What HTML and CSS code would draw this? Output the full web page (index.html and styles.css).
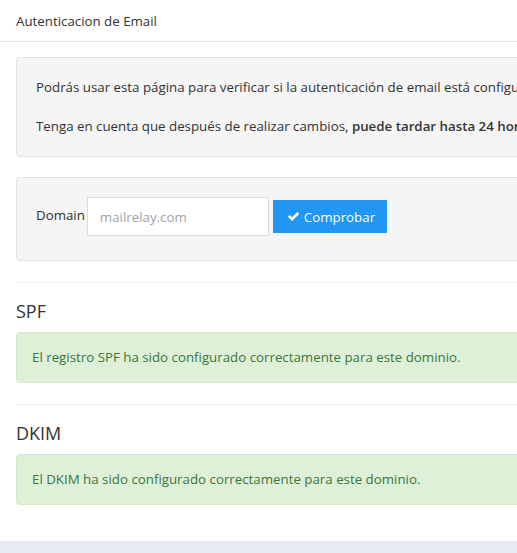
FILE: index.html
```html
<!DOCTYPE html>
<html lang="es">
<head>
    <meta charset="UTF-8">
    <meta name="viewport" content="width=device-width, initial-scale=1.0">
    <title>Autenticacion de Email</title>
    <link rel="stylesheet" href="styles.css">
</head>
<body>

    <div class="card">
        <div class="card-header">Autenticacion de Email</div>

        <div class="card-body">
            <div class="well">
                <p>Podrás usar esta página para verificar si la autenticación de email está configurada correctamente.</p>
                <p>Tenga en cuenta que después de realizar cambios, <strong>puede tardar hasta 24 horas</strong> en propagarse.</p>
            </div>

            <form class="well check-form">
                <label for="domain">Domain</label>
                <input type="text" id="domain" placeholder="mailrelay.com">
                <button type="button" class="button">
                    <svg class="icon" viewBox="0 0 16 16" width="13" height="13">
                        <path d="M1 8.4 L3.4 6 L6.2 8.8 L12.6 2.4 L15 4.8 L6.2 13.6 Z" fill="#fff"/>
                    </svg>
                    Comprobar
                </button>
            </form>

            <!-- results -->
            <div class="result">
                <h3>SPF</h3>
                <div class="alert">El registro SPF ha sido configurado correctamente para este dominio.</div>
            </div>

            <div class="result">
                <h3>DKIM</h3>
                <div class="alert">El DKIM ha sido configurado correctamente para este dominio.</div>
            </div>
        </div>
    </div>

</body>
</html>
```

FILE: styles.css
```css
body {
    font-family: 'Open Sans', 'Noto Sans', sans-serif;
    font-size: 13.3px;
    color: #333;
    background-color: #e9ebf2;
    margin: 0;
    overflow: hidden;
}

.card {
    width: 820px;
    background-color: #fff;
    box-shadow: 0 2px 3px rgba(0, 0, 0, 0.08);
}

.card-header {
    height: 41px;
    line-height: 43px;
    padding: 0 16px;
    border-bottom: 1px solid #e6e6e6;
}

.card-body {
    padding: 15px 16px 36px;
}

.well {
    background-color: #f5f5f5;
    border: 1px solid #e3e3e3;
    border-radius: 4px;
    padding: 19px 19px 20px;
}

.well p {
    margin: 0 0 19px;
    line-height: 20px;
}

.well p:last-child {
    margin-bottom: 0;
}

.well strong {
    font-weight: 600;
}

.check-form {
    display: flex;
    align-items: center;
    margin: 20px 0 0;
    padding: 19px 19px 24px;
}

.check-form label {
    margin-right: 2px;
    padding-bottom: 4px;
}

.check-form input {
    width: 182px;
    height: 39px;
    box-sizing: border-box;
    border: 1px solid #ddd;
    background-color: #fff;
    padding: 0 12px;
    font-family: inherit;
    font-size: 13.3px;
    color: #555;
    outline: none;
}

.check-form input::placeholder {
    color: #a3a3a3;
}

.button {
    display: flex;
    align-items: center;
    gap: 4px;
    margin-left: 4px;
    height: 33px;
    padding: 0 12px 0 14px;
    border: none;
    background-color: #2196f3;
    color: #fff;
    font-family: inherit;
    font-size: 13.3px;
    cursor: pointer;
}

.result {
    margin-top: 21px;
    border-top: 1px solid #eee;
}

.result h3 {
    margin: 17px 0 10px;
    font-size: 18px;
    font-weight: normal;
    line-height: 22px;
}

.alert {
    background-color: #dff0d8;
    border: 1px solid #d6e9c6;
    border-radius: 4px;
    color: #3c763d;
    padding: 15px 15px;
    line-height: 19px;
}
```
